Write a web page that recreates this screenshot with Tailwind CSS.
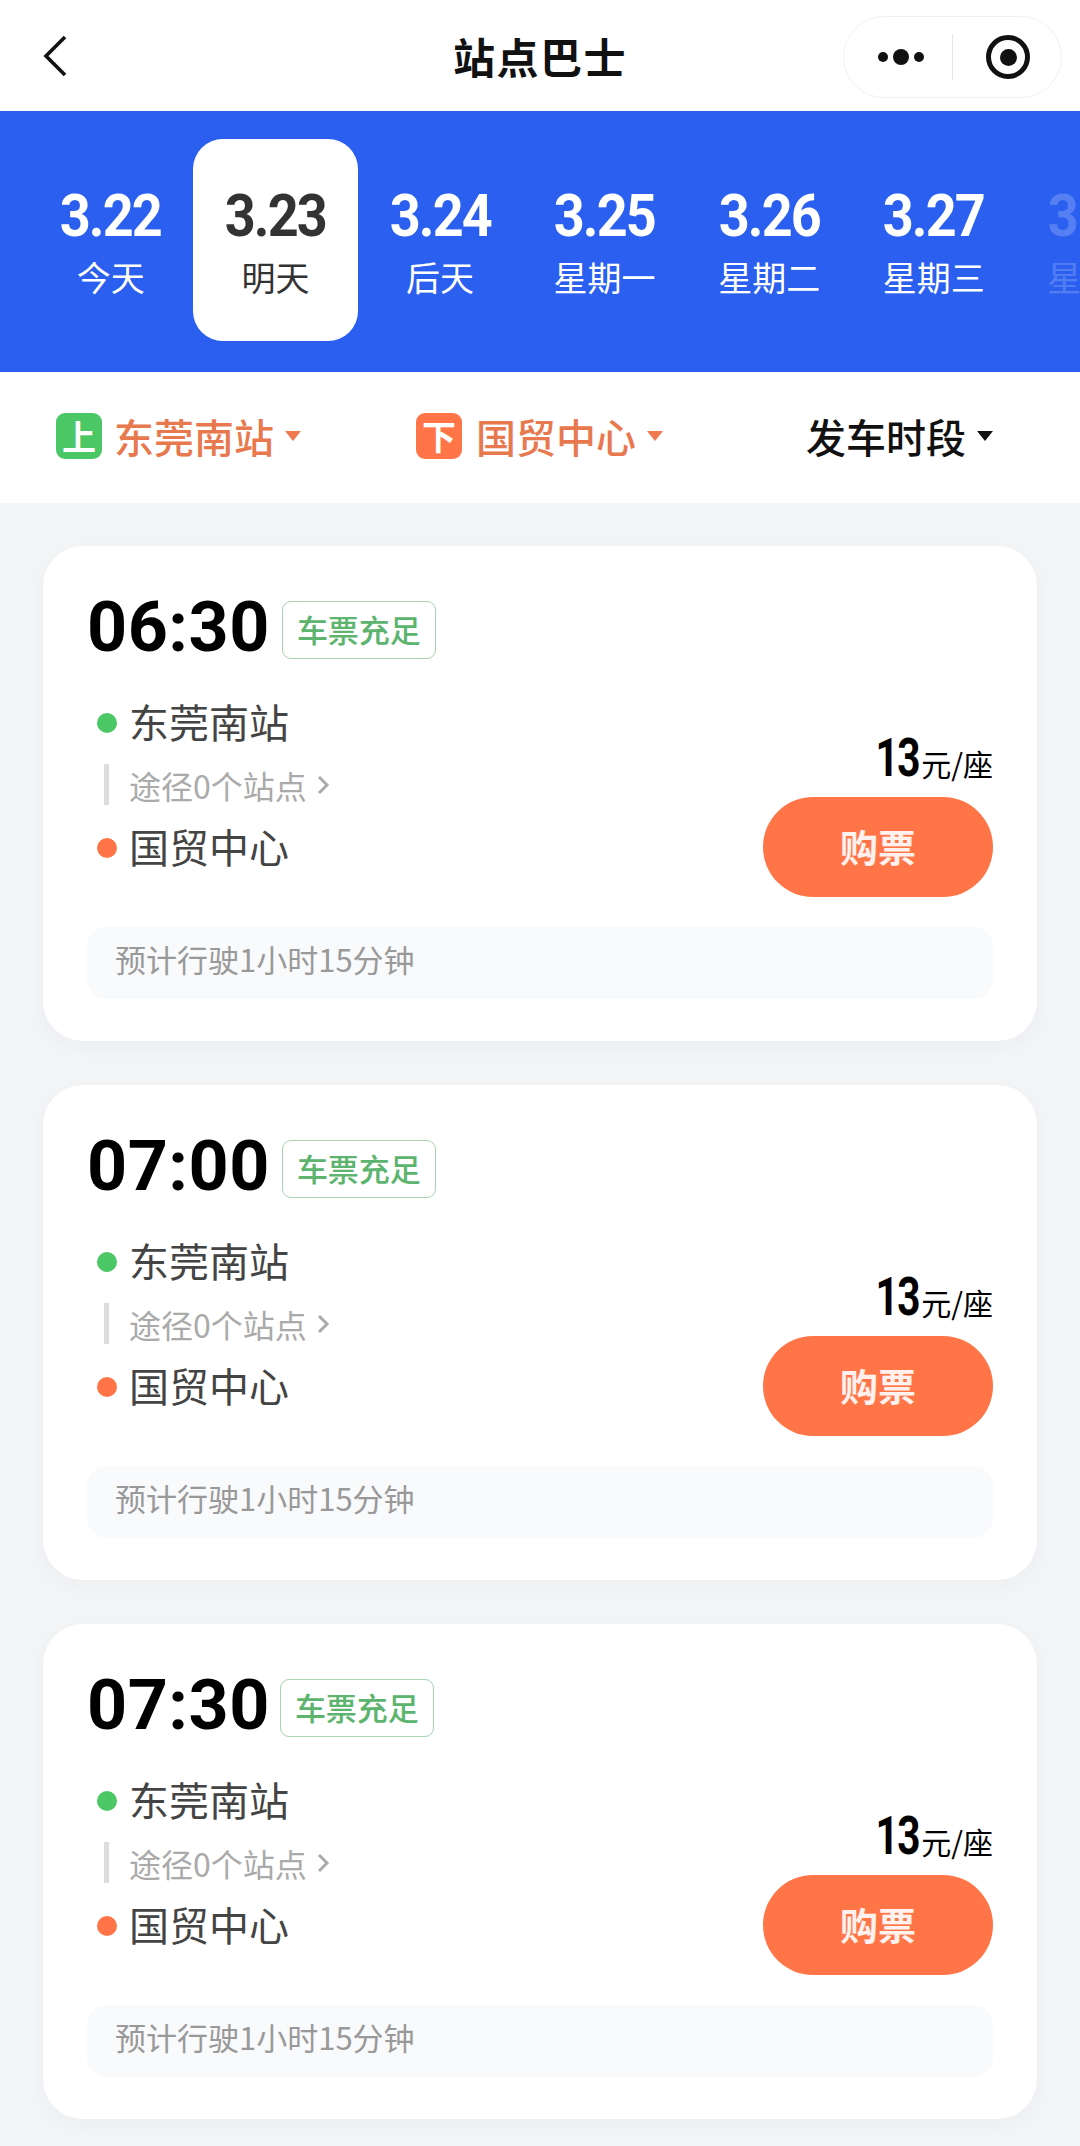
<!DOCTYPE html>
<html lang="zh">
<head>
  <meta charset="UTF-8" />
  <title>站点巴士</title>
  <script src="https://cdn.jsdelivr.net/npm/@tailwindcss/browser@4"></script>
</head>
<body class="bg-[#f4f5f7] h-[2146px] overflow-hidden font-['Noto_Sans_CJK_SC','Noto_Sans',sans-serif]">
  <!-- top bar -->
  <header class="relative h-[111px] bg-white flex items-center justify-center">
    <svg class="absolute left-[40px] top-[32px] w-[30px] h-[48px]" viewBox="0 0 30 48" fill="none" stroke="#111" stroke-width="3.6"><path d="M25 5 L6 24 L25 43"/></svg>
    <h1 class="text-[42px] font-bold text-[#111] leading-none tracking-[1.5px]">站点巴士</h1>
    <div class="absolute left-[843px] top-[16px] w-[219px] h-[82px] rounded-full border border-[#f1f1f1] flex items-center">
      <div class="w-[108px] flex items-center justify-center gap-[5px] pl-[6px]">
        <span class="w-[10px] h-[10px] rounded-full bg-[#111]"></span>
        <span class="w-[16px] h-[16px] rounded-full bg-[#111]"></span>
        <span class="w-[10px] h-[10px] rounded-full bg-[#111]"></span>
      </div>
      <span class="w-px h-[46px] bg-[#e5e5e5]"></span>
      <div class="flex-1 flex items-center justify-center pl-[2px]">
        <span class="w-[44px] h-[44px] rounded-full border-[5px] border-[#111] flex items-center justify-center">
          <span class="w-[17px] h-[17px] rounded-full bg-[#111]"></span>
        </span>
      </div>
    </div>
  </header>

  <!-- date strip -->
  <nav class="relative h-[261px] bg-[#2b5ff0] flex items-start pt-[28px] pl-[28.5px] overflow-hidden">
    <div class="w-[164.6px] h-[202px] pt-[7px] shrink-0 flex flex-col items-center justify-center text-white">
      <span class="text-[60px] font-bold leading-[60px] tracking-[-2px] scale-x-[0.9] font-['Roboto']">3.22</span>
      <span class="text-[34px] leading-[50px] mt-[6px]">今天</span>
    </div>
    <div class="w-[164.6px] h-[202px] pt-[7px] shrink-0 flex flex-col items-center justify-center bg-white rounded-[30px] text-[#333]">
      <span class="text-[60px] font-bold leading-[60px] tracking-[-2px] scale-x-[0.9] font-['Roboto']">3.23</span>
      <span class="text-[34px] leading-[50px] mt-[6px]">明天</span>
    </div>
    <div class="w-[164.6px] h-[202px] pt-[7px] shrink-0 flex flex-col items-center justify-center text-white">
      <span class="text-[60px] font-bold leading-[60px] tracking-[-2px] scale-x-[0.9] font-['Roboto']">3.24</span>
      <span class="text-[34px] leading-[50px] mt-[6px]">后天</span>
    </div>
    <div class="w-[164.6px] h-[202px] pt-[7px] shrink-0 flex flex-col items-center justify-center text-white">
      <span class="text-[60px] font-bold leading-[60px] tracking-[-2px] scale-x-[0.9] font-['Roboto']">3.25</span>
      <span class="text-[34px] leading-[50px] mt-[6px]">星期一</span>
    </div>
    <div class="w-[164.6px] h-[202px] pt-[7px] shrink-0 flex flex-col items-center justify-center text-white">
      <span class="text-[60px] font-bold leading-[60px] tracking-[-2px] scale-x-[0.9] font-['Roboto']">3.26</span>
      <span class="text-[34px] leading-[50px] mt-[6px]">星期二</span>
    </div>
    <div class="w-[164.6px] h-[202px] pt-[7px] shrink-0 flex flex-col items-center justify-center text-white">
      <span class="text-[60px] font-bold leading-[60px] tracking-[-2px] scale-x-[0.9] font-['Roboto']">3.27</span>
      <span class="text-[34px] leading-[50px] mt-[6px]">星期三</span>
    </div>
    <div class="w-[164.6px] h-[202px] pt-[7px] shrink-0 flex flex-col items-center justify-center text-white/20">
      <span class="text-[60px] font-bold leading-[60px] tracking-[-2px] scale-x-[0.9] font-['Roboto']">3.28</span>
      <span class="text-[34px] leading-[50px] mt-[6px]">星期四</span>
    </div>
  </nav>

  <!-- filters -->
  <section class="h-[131px] bg-white flex items-center pb-[4px]">
    <div class="flex items-center w-[416px] pl-[56px]">
      <span class="w-[46px] h-[46px] rounded-[9px] bg-[#4cc765] text-white text-[34px] font-bold leading-none flex items-center justify-center">上</span>
      <span class="ml-[12px] text-[40px] font-medium leading-none text-[#e8794f]">东莞南站</span>
      <span class="ml-[11px] border-x-[8px] border-x-transparent border-t-[10px] border-t-[#ef7a4f]"></span>
    </div>
    <div class="flex items-center w-[390px]">
      <span class="w-[46px] h-[46px] rounded-[9px] bg-[#ff7547] text-white text-[34px] font-bold leading-none flex items-center justify-center">下</span>
      <span class="ml-[14px] text-[40px] font-medium leading-none text-[#e8794f]">国贸中心</span>
      <span class="ml-[11px] border-x-[8px] border-x-transparent border-t-[10px] border-t-[#ef7a4f]"></span>
    </div>
    <div class="flex items-center">
      <span class="text-[40px] font-medium leading-none text-[#111]">发车时段</span>
      <span class="ml-[11px] border-x-[8px] border-x-transparent border-t-[10px] border-t-[#111]"></span>
    </div>
  </section>

  <!-- trips -->
  <main class="px-[43px] pt-[43px] flex flex-col gap-[44px]">
    <article class="h-[495px] bg-white rounded-[40px] shadow-[0_6px_24px_rgba(30,40,70,0.04)] px-[44px] pt-[39px]">
      <div class="flex items-center h-[84px]">
        <span class="text-[70px] font-bold leading-none text-black font-['Roboto'] tracking-[0.5px]">06:30</span>
        <span class="ml-[12px] mt-[5px] h-[58px] w-[154px] pb-[3px] rounded-[9px] border border-[#a9d3b1] text-[#5cb46e] text-[31px] font-medium leading-none flex items-center justify-center">车票充足</span>
      </div>
      <div class="flex justify-between items-end mt-[10px] h-[218px]">
        <div class="flex flex-col self-start mt-[12px]">
          <div class="flex items-center h-[60px]">
            <span class="ml-[10px] mt-[4px] w-[20px] h-[20px] rounded-full bg-[#4cc765]"></span>
            <span class="ml-[12px] text-[40px] leading-none text-[#444]">东莞南站</span>
          </div>
          <div class="flex items-center h-[63px] mt-[2px]">
            <span class="ml-[17px] w-[5px] h-[41px] bg-[#ddd]"></span>
            <span class="ml-[20px] text-[32px] leading-none text-[#aaa]">途径0个站点</span>
            <svg class="ml-[9px] w-[14px] h-[22px]" viewBox="0 0 14 22" fill="none" stroke="#aaa" stroke-width="3"><path d="M3 3 L11 11 L3 19"/></svg>
          </div>
          <div class="flex items-center h-[60px]">
            <span class="ml-[10px] mt-[4px] w-[20px] h-[20px] rounded-full bg-[#ff7547]"></span>
            <span class="ml-[12px] text-[40px] leading-none text-[#444]">国贸中心</span>
          </div>
        </div>
        <div class="flex flex-col items-end">
          <div class="flex items-baseline text-black leading-none">
            <span class="text-[54px] font-bold font-['Roboto'] tracking-[-2px] scale-x-[0.75] origin-right">13</span>
            <span class="text-[30px] ml-[2px]">元/座</span>
          </div>
          <button class="mt-[12px] w-[230px] h-[100px] pb-[3px] rounded-full bg-[#ff7547] text-white/90 text-[38px] font-bold leading-none">购票</button>
        </div>
      </div>
      <div class="mt-[30px] h-[72px] pb-[9px] rounded-[20px] bg-[#f9fafc] flex items-center pl-[28px] text-[31px] leading-none text-[#999]">预计行驶1小时15分钟</div>
    </article>

    <article class="h-[495px] bg-white rounded-[40px] shadow-[0_6px_24px_rgba(30,40,70,0.04)] px-[44px] pt-[39px]">
      <div class="flex items-center h-[84px]">
        <span class="text-[70px] font-bold leading-none text-black font-['Roboto'] tracking-[0.5px]">07:00</span>
        <span class="ml-[12px] mt-[5px] h-[58px] w-[154px] pb-[3px] rounded-[9px] border border-[#a9d3b1] text-[#5cb46e] text-[31px] font-medium leading-none flex items-center justify-center">车票充足</span>
      </div>
      <div class="flex justify-between items-end mt-[10px] h-[218px]">
        <div class="flex flex-col self-start mt-[12px]">
          <div class="flex items-center h-[60px]">
            <span class="ml-[10px] mt-[4px] w-[20px] h-[20px] rounded-full bg-[#4cc765]"></span>
            <span class="ml-[12px] text-[40px] leading-none text-[#444]">东莞南站</span>
          </div>
          <div class="flex items-center h-[63px] mt-[2px]">
            <span class="ml-[17px] w-[5px] h-[41px] bg-[#ddd]"></span>
            <span class="ml-[20px] text-[32px] leading-none text-[#aaa]">途径0个站点</span>
            <svg class="ml-[9px] w-[14px] h-[22px]" viewBox="0 0 14 22" fill="none" stroke="#aaa" stroke-width="3"><path d="M3 3 L11 11 L3 19"/></svg>
          </div>
          <div class="flex items-center h-[60px]">
            <span class="ml-[10px] mt-[4px] w-[20px] h-[20px] rounded-full bg-[#ff7547]"></span>
            <span class="ml-[12px] text-[40px] leading-none text-[#444]">国贸中心</span>
          </div>
        </div>
        <div class="flex flex-col items-end">
          <div class="flex items-baseline text-black leading-none">
            <span class="text-[54px] font-bold font-['Roboto'] tracking-[-2px] scale-x-[0.75] origin-right">13</span>
            <span class="text-[30px] ml-[2px]">元/座</span>
          </div>
          <button class="mt-[12px] w-[230px] h-[100px] pb-[3px] rounded-full bg-[#ff7547] text-white/90 text-[38px] font-bold leading-none">购票</button>
        </div>
      </div>
      <div class="mt-[30px] h-[72px] pb-[9px] rounded-[20px] bg-[#f9fafc] flex items-center pl-[28px] text-[31px] leading-none text-[#999]">预计行驶1小时15分钟</div>
    </article>

    <article class="h-[495px] bg-white rounded-[40px] shadow-[0_6px_24px_rgba(30,40,70,0.04)] px-[44px] pt-[39px]">
      <div class="flex items-center h-[84px]">
        <span class="text-[70px] font-bold leading-none text-black font-['Roboto'] tracking-[0.5px]">07:30</span>
        <span class="ml-[10px] mt-[5px] h-[58px] w-[154px] pb-[3px] rounded-[9px] border border-[#a9d3b1] text-[#5cb46e] text-[31px] font-medium leading-none flex items-center justify-center">车票充足</span>
      </div>
      <div class="flex justify-between items-end mt-[10px] h-[218px]">
        <div class="flex flex-col self-start mt-[12px]">
          <div class="flex items-center h-[60px]">
            <span class="ml-[10px] mt-[4px] w-[20px] h-[20px] rounded-full bg-[#4cc765]"></span>
            <span class="ml-[12px] text-[40px] leading-none text-[#444]">东莞南站</span>
          </div>
          <div class="flex items-center h-[63px] mt-[2px]">
            <span class="ml-[17px] w-[5px] h-[41px] bg-[#ddd]"></span>
            <span class="ml-[20px] text-[32px] leading-none text-[#aaa]">途径0个站点</span>
            <svg class="ml-[9px] w-[14px] h-[22px]" viewBox="0 0 14 22" fill="none" stroke="#aaa" stroke-width="3"><path d="M3 3 L11 11 L3 19"/></svg>
          </div>
          <div class="flex items-center h-[60px]">
            <span class="ml-[10px] mt-[4px] w-[20px] h-[20px] rounded-full bg-[#ff7547]"></span>
            <span class="ml-[12px] text-[40px] leading-none text-[#444]">国贸中心</span>
          </div>
        </div>
        <div class="flex flex-col items-end">
          <div class="flex items-baseline text-black leading-none">
            <span class="text-[54px] font-bold font-['Roboto'] tracking-[-2px] scale-x-[0.75] origin-right">13</span>
            <span class="text-[30px] ml-[2px]">元/座</span>
          </div>
          <button class="mt-[12px] w-[230px] h-[100px] pb-[3px] rounded-full bg-[#ff7547] text-white/90 text-[38px] font-bold leading-none">购票</button>
        </div>
      </div>
      <div class="mt-[30px] h-[72px] pb-[9px] rounded-[20px] bg-[#f9fafc] flex items-center pl-[28px] text-[31px] leading-none text-[#999]">预计行驶1小时15分钟</div>
    </article>
  </main>
</body>
</html>
